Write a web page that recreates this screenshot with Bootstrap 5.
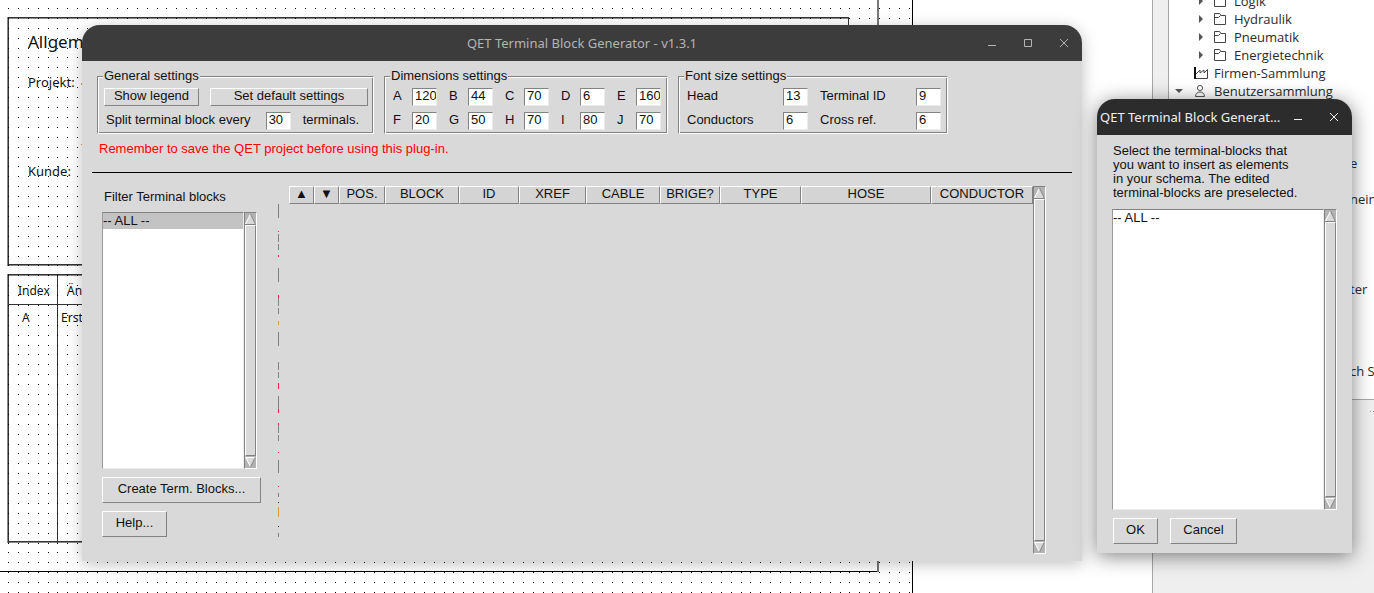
<!DOCTYPE html>
<html lang="en">
<head>
<meta charset="utf-8">
<meta name="viewport" content="width=device-width, initial-scale=1">
<title>QET Terminal Block Generator - v1.3.1</title>
<link href="https://cdn.jsdelivr.net/npm/bootstrap@5.3.0/dist/css/bootstrap.min.css" rel="stylesheet">
<style>
  :root { --face:#d9d9d9; --dark:#828282; --tk:"Liberation Sans",Arial,sans-serif; --ui:"Noto Sans","Open Sans",sans-serif; }
  body { font-family:var(--ui); font-size:13px; line-height:18px; color:#111; background:#fff; }
  .sheet { min-width:0; }
  .sheet svg { display:block; }
  .dock { width:222px; background:#efefef; border-left:1px solid #a7a7a7; }
  .tree { height:400px; margin-left:15px; border-left:1px solid #a7a7a7; border-bottom:1px solid #a7a7a7; background:#fff; padding-top:10px; color:#2b2b2b; font-family:"Open Sans","Noto Sans",sans-serif; }
  .tree li { height:18px; white-space:nowrap; }
  .tree li:first-child { margin-top:-18px; }
  .tree li.half { height:10px; }
  .tree .deep { padding-left:24px; }
  .tree .top-level { padding-left:4px; }
  .tree .far { padding-left:181px; }
  .tree svg { flex:none; }

  .win { background:var(--face); border-radius:18px 18px 0 0; font-family:var(--tk); line-height:14px; color:#111; }
  .win-main { left:82px; top:25px; width:1000px; height:536px; box-shadow:0 3px 16px rgba(0,0,0,.25); }
  .win-pick { left:1097px; top:99px; width:255px; height:454px; box-shadow:0 3px 20px rgba(0,0,0,.5); }
  .bar { height:36px; border-radius:18px 18px 0 0; background:#3c3c3c; color:#b4b4b4; font-family:var(--ui); font-size:13px; line-height:36px; }
  .bar-active { background:#2c2c2c; color:#f0f0f0; padding-left:3px; }
  .bar h1 { font-size:13px; line-height:36px; font-weight:400; }
  .bar-main h1 { padding-left:108px; }
  .win-btn { width:36px; height:36px; padding:0; border:0; background:none; color:inherit; }
  .win-btn svg { display:block; margin:auto; }

  .content-main { padding:7px 10px 0; }
  .settings { padding-left:5px; gap:10px; }
  .group { border:1px solid; border-color:var(--dark) #fff #fff var(--dark); box-shadow:inset 1px 1px #fff,inset -1px -1px var(--dark); height:66px; padding:4px 5px 3px 5px; }
  .group legend { float:none; width:auto; padding:0 1px; margin:0; font-size:13px; line-height:16px; height:16px; background:var(--face); }
  .group-general { width:277px; }
  .group-dims { width:284px; }
  .group-fonts { width:270px; }
  .line-row { height:18px; margin-bottom:6px; padding-left:1px; }
  .split-row { padding-left:3px; }
  .tk-btn { background:var(--face); border:1px solid; border-color:#fff var(--dark) var(--dark) #fff; border-radius:0; color:#111; padding:0 0 2px; font-family:var(--tk); font-size:13px; line-height:14px; height:26px; }
  .tk-btn.flat { height:18px; }
  .w-legend { width:95px; } .w-default { width:158px; } .w-create { width:159px; } .w-help { width:65px; } .w-ok { width:45px; } .w-cancel { width:67px; }
  .tk-in { width:25px; height:18px; padding:0 0 3px 2px; border:1px solid; border-color:var(--dark) #ececec #ececec var(--dark); border-radius:0; background:#fff; color:#111; font-family:var(--tk); font-size:13px; line-height:14px; }
  .after-in { padding:0 9px 0 12px; }
  .dims, .fonts { display:grid; row-gap:6px; padding-left:3px; }
  .dims { grid-template-columns:repeat(4,19px 37px) 19px 25px; }
  .fonts { grid-template-columns:96px 37px 96px 25px; }
  .dims label, .fonts label, .line-row label { line-height:16px; }
  .note { color:#f00; padding-left:7px; margin-top:8px; }
  .rule { border-top:1px solid #000; opacity:1; margin:16px 0 0; }
  .lower { padding-top:13px; }

  .tk-list { border:1px solid; border-color:var(--dark) #ececec #ececec #999; border-radius:0; background:#fff; padding:0; overflow:hidden; font-family:var(--tk); font-size:13px; color:#111; outline:0; }
  .tk-list option { padding:0; line-height:14px; min-height:16px; height:16px; }
  .tk-list option.picked { background:#c3c3c3; }
  .list-filter { width:142px; }
  .list-pick { width:212px; }
  .tk-scroll { width:13px; background:#b3b3b3; border:1px solid; border-color:var(--dark) #fff #fff var(--dark); }
  .tk-scroll svg { display:block; flex:none; }
  .thumb { background:var(--face); border:1px solid; border-color:#fff var(--dark) var(--dark) #fff; }
  .filter-box { height:257px; }
  .pick-box { height:301px; }
  .content-pick { padding:9px 15px 0; }
  .content-pick label { padding-left:1px; margin-bottom:9px; }
  .pick-actions { padding:8px 0 0 1px; gap:12px; }
  .filter-col { width:176px; padding-left:10px; }
  .filter-col label { padding-left:2px; }
  .heads { table-layout:fixed; border-collapse:separate; border-spacing:0; width:744px; }
  .heads th { height:18px; padding:0 0 2px; font-weight:400; line-height:14px; text-align:center; white-space:nowrap; background:#d4d4d4; border:1px solid; border-color:#fff var(--dark) var(--dark) #fff; }
  .grid-area { height:368px; }
</style>
</head>
<body class="vh-100 overflow-hidden">
<main class="position-relative d-flex h-100">
  <section class="sheet flex-grow-1 overflow-hidden" aria-label="Drawing">
    <svg width="914" height="600" font-family="Noto Sans, Open Sans, sans-serif" fill="#111">
      <g fill="none" stroke-width="1" shape-rendering="crispEdges">
        <path stroke="#000" d="M912.500 0V600M0 571.500H878"/>
        <path stroke="#777" stroke-width="2" d="M878 0V572"/>
        <path stroke="#888" d="M7.500 17V265M7.500 274V543M7 265.500H848M7 542.500H848"/>
        <path stroke="#333" d="M8.500 17V265M8 17.500H848.500V265M8 264.500H848M8.500 274V543M8 274.500H848M8 304.500H848M57.500 274V543M8 541.500H848"/>
        <path stroke="#888" d="M8 18.500H848M8 275.500H848"/>
      </g>
      <path id="dots" fill="#000" shape-rendering="crispEdges"/>
      <g font-size="13">
        <text x="28" y="48" font-size="17">Allgemein</text>
        <text x="28" y="87">Projekt:</text>
        <text x="28" y="176">Kunde:</text>
      </g>
      <g font-size="12">
        <text x="18" y="295">Index</text>
        <text x="67" y="295">Änderung</text>
        <text x="22" y="322">A</text>
        <text x="61" y="322">Erstellt</text>
      </g>
      <path fill="#e0a060" d="M81 83h1v2h-1zM81 144h1v1h-1z"/>
    </svg>
  </section>

  <aside class="dock flex-shrink-0">
    <ul class="tree list-unstyled mb-0 overflow-hidden">
      <li class="deep d-flex align-items-center"><svg width="41" height="16"><path d="M6 4l4 4-4 4z" fill="#555"/><path d="M21.500 2.500v11h11v-9" fill="none" stroke="#444"/></svg>Logik</li>
      <li class="deep d-flex align-items-center"><svg width="41" height="16"><path d="M6 4l4 4-4 4z" fill="#555"/><path d="M21.500 2.500h5l1.500 2h4.500v9h-11zM21.500 6.500h4l2-2" fill="none" stroke="#444"/></svg>Hydraulik</li>
      <li class="deep d-flex align-items-center"><svg width="41" height="16"><path d="M6 4l4 4-4 4z" fill="#555"/><path d="M21.500 2.500h5l1.500 2h4.500v9h-11zM21.500 6.500h4l2-2" fill="none" stroke="#444"/></svg>Pneumatik</li>
      <li class="deep d-flex align-items-center"><svg width="41" height="16"><path d="M6 4l4 4-4 4z" fill="#555"/><path d="M21.500 2.500h5l1.500 2h4.500v9h-11zM21.500 6.500h4l2-2" fill="none" stroke="#444"/></svg>Energietechnik</li>
      <li class="top-level d-flex align-items-center"><svg width="41" height="16"><path d="M22 2v12" stroke="#111" stroke-width="2"/><path d="M23 9l4-4v3l4-3v3l3.500-3.500v9H23" fill="none" stroke="#444"/></svg>Firmen-Sammlung</li>
      <li class="top-level d-flex align-items-center"><svg width="41" height="16"><path d="M2 6h8l-4 4z" fill="#555"/><circle cx="27" cy="5" r="2.600" fill="none" stroke="#555"/><path d="M22.500 13.500c0-6 9-6 9 0z" fill="none" stroke="#555"/></svg>Benutzersammlung</li>
      <li></li><li></li><li></li>
      <li class="far">e</li>
      <li></li>
      <li class="far">nein</li>
      <li></li><li></li><li></li><li></li>
      <li class="far">ter</li>
      <li></li><li></li><li></li>
      <li class="half"></li>
      <li class="far">ch S</li>
    </ul>
    <svg class="d-block ms-auto" width="4" height="20"><path d="M0 11h1v1h-1zM3 11h1v1h-1z" fill="#999"/></svg>
  </aside>

  <section class="win win-main position-absolute d-flex flex-column">
    <header class="bar bar-main d-flex">
      <h1 class="flex-grow-1 text-center mb-0">QET Terminal Block Generator - v1.3.1</h1>
      <button class="win-btn" type="button" aria-label="Minimize"><svg width="12" height="12"><path d="M2 8.500h8" stroke="currentColor"/></svg></button>
      <button class="win-btn" type="button" aria-label="Maximize"><svg width="12" height="12"><path d="M2.500 2.500h7v7h-7z" fill="none" stroke="currentColor"/></svg></button>
      <button class="win-btn" type="button" aria-label="Close"><svg width="12" height="12"><path d="M2 2l8 8M10 2l-8 8" stroke="currentColor"/></svg></button>
    </header>

    <div class="content-main flex-grow-1 d-flex flex-column">
      <form class="settings d-flex">
        <fieldset class="group group-general">
          <legend>General settings</legend>
          <div class="line-row d-flex justify-content-between">
            <button class="tk-btn flat w-legend" type="button">Show legend</button>
            <button class="tk-btn flat w-default" type="button">Set default settings</button>
          </div>
          <div class="line-row split-row d-flex">
            <label for="split" class="flex-grow-1">Split terminal block every</label>
            <input id="split" class="tk-in" value="30">
            <label for="split" class="after-in">terminals.</label>
          </div>
        </fieldset>
        <fieldset class="group group-dims">
          <legend>Dimensions settings</legend>
          <div class="dims">
            <label for="a">A</label><input id="a" class="tk-in" value="120">
            <label for="b">B</label><input id="b" class="tk-in" value="44">
            <label for="c">C</label><input id="c" class="tk-in" value="70">
            <label for="d">D</label><input id="d" class="tk-in" value="6">
            <label for="e">E</label><input id="e" class="tk-in" value="160">
            <label for="f">F</label><input id="f" class="tk-in" value="20">
            <label for="g">G</label><input id="g" class="tk-in" value="50">
            <label for="h">H</label><input id="h" class="tk-in" value="70">
            <label for="i">I</label><input id="i" class="tk-in" value="80">
            <label for="j">J</label><input id="j" class="tk-in" value="70">
          </div>
        </fieldset>
        <fieldset class="group group-fonts">
          <legend>Font size settings</legend>
          <div class="fonts">
            <label for="fh">Head</label><input id="fh" class="tk-in" value="13">
            <label for="ft">Terminal ID</label><input id="ft" class="tk-in" value="9">
            <label for="fc">Conductors</label><input id="fc" class="tk-in" value="6">
            <label for="fx">Cross ref.</label><input id="fx" class="tk-in" value="6">
          </div>
        </fieldset>
      </form>
      <p class="note mb-0">Remember to save the QET project before using this plug-in.</p>
      <hr class="rule">

      <div class="lower d-flex">
        <div class="filter-col d-flex flex-column align-items-start pt-1">
          <label for="filter" class="mb-2">Filter Terminal blocks</label>
          <div class="filter-box d-flex">
            <select id="filter" class="tk-list list-filter" size="4"><option class="picked">-- ALL --</option></select>
            <div class="tk-scroll d-flex flex-column">
              <svg width="11" height="12"><path d="M0 11L5.500 1 11 11z" fill="#d9d9d9"/><path d="M.5 11L5.500 1" stroke="#fff" fill="none"/><path d="M5.500 1l5 10.500H0" stroke="#828282" fill="none"/></svg>
              <div class="thumb flex-grow-1"></div>
              <svg width="11" height="12"><path d="M0 1h11L5.500 11z" fill="#d9d9d9"/><path d="M0 1.500h11M.5 1l5 10" stroke="#fff" fill="none"/><path d="M10.500 1l-5 10" stroke="#828282"/></svg>
            </div>
          </div>
          <button class="tk-btn w-create mt-2" type="button">Create Term. Blocks...</button>
          <button class="tk-btn w-help mt-2" type="button">Help...</button>
        </div>
        <svg width="21" height="356" shape-rendering="crispEdges" fill="none" stroke-width="1">
          <path stroke="#828282" d="M10.500 18v14M10.500 48v8M10.500 58v6M10.500 82v14M10.500 112v8M10.500 122v6M10.500 146v14M10.500 176v8M10.500 186v6M10.500 210v14M10.500 239v8M10.500 249v6M10.500 274v13M10.500 307v4M10.500 347v4"/>
          <path stroke="#f02040" d="M10.500 45v1M10.500 69v2M10.500 109v3M10.500 197v6M10.500 223v4M10.500 237v2M10.500 266v1M10.500 300v1"/>
          <path stroke="#d99a40" d="M10.500 135v4M10.500 321v10"/>
          <path stroke="#234" d="M10.500 316v1M10.500 340v1"/>
        </svg>
        <div class="grid-area d-flex">
          <table class="heads align-self-start">
            <colgroup><col style="width:25px"><col style="width:25px"><col style="width:46px"><col style="width:74px"><col style="width:60px"><col style="width:67px"><col style="width:74px"><col style="width:60px"><col style="width:81px"><col style="width:130px"><col style="width:102px"></colgroup>
            <thead><tr><th>▲</th><th>▼</th><th>POS.</th><th>BLOCK</th><th>ID</th><th>XREF</th><th>CABLE</th><th>BRIGE?</th><th>TYPE</th><th>HOSE</th><th>CONDUCTOR</th></tr></thead>
          </table>
          <div class="tk-scroll d-flex flex-column">
            <svg width="11" height="12"><path d="M0 11L5.500 1 11 11z" fill="#d9d9d9"/><path d="M.5 11L5.500 1" stroke="#fff" fill="none"/><path d="M5.500 1l5 10.500H0" stroke="#828282" fill="none"/></svg>
            <div class="thumb flex-grow-1"></div>
            <svg width="11" height="12"><path d="M0 1h11L5.500 11z" fill="#d9d9d9"/><path d="M0 1.500h11M.5 1l5 10" stroke="#fff" fill="none"/><path d="M10.500 1l-5 10" stroke="#828282"/></svg>
          </div>
        </div>
      </div>
    </div>
  </section>

  <section class="win win-pick position-absolute">
    <header class="bar bar-active d-flex">
      <h1 class="flex-grow-1 mb-0 text-nowrap">QET Terminal Block Generat…</h1>
      <button class="win-btn" type="button" aria-label="Minimize"><svg width="12" height="12"><path d="M2 8.500h8" stroke="currentColor"/></svg></button>
      <button class="win-btn" type="button" aria-label="Close"><svg width="12" height="12"><path d="M2 2l8 8M10 2l-8 8" stroke="currentColor"/></svg></button>
    </header>
    <div class="content-pick">
      <label for="pick" class="d-block">Select the terminal-blocks that<br>you want to insert as elements<br>in your schema. The edited<br>terminal-blocks are preselected.</label>
      <div class="pick-box d-flex">
        <select id="pick" class="tk-list list-pick" size="4"><option>-- ALL --</option></select>
        <div class="tk-scroll d-flex flex-column">
          <svg width="11" height="12"><path d="M0 11L5.500 1 11 11z" fill="#d9d9d9"/><path d="M.5 11L5.500 1" stroke="#fff" fill="none"/><path d="M5.500 1l5 10.500H0" stroke="#828282" fill="none"/></svg>
          <div class="thumb flex-grow-1"></div>
          <svg width="11" height="12"><path d="M0 1h11L5.500 11z" fill="#d9d9d9"/><path d="M0 1.500h11M.5 1l5 10" stroke="#fff" fill="none"/><path d="M10.500 1l-5 10" stroke="#828282"/></svg>
        </div>
      </div>
      <div class="pick-actions d-flex">
        <button class="tk-btn w-ok" type="button">OK</button>
        <button class="tk-btn w-cancel" type="button">Cancel</button>
      </div>
    </div>
  </section>
</main>
<script src="https://cdn.jsdelivr.net/npm/bootstrap@5.3.0/dist/js/bootstrap.bundle.min.js"></script>
<script>
  // Snap grid of the drawing sheet.
  const step = 9.9;
  let d = '';
  for (let y = 8; y < 600; y += step)
    for (let x = 8; x < 912; x += step)
      d += `M${Math.round(x)} ${Math.round(y)}h1v1h-1z`;
  document.getElementById('dots').setAttribute('d', d);
</script>
</body>
</html>
